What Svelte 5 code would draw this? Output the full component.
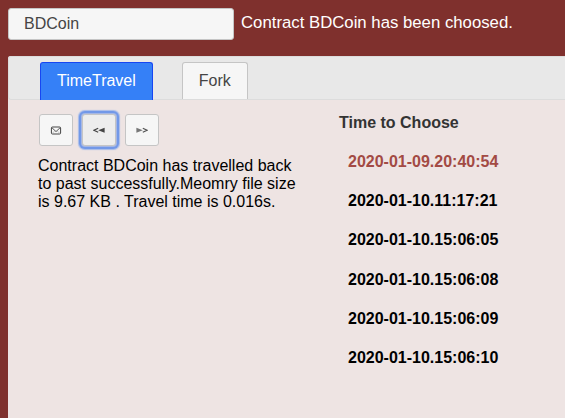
<script>
  const times = [
    '2020-01-09.20:40:54',
    '2020-01-10.11:17:21',
    '2020-01-10.15:06:05',
    '2020-01-10.15:06:08',
    '2020-01-10.15:06:09',
    '2020-01-10.15:06:10'
  ];
  let selected = $state(0);
  let tab = $state('TimeTravel');
</script>

<main>
  <header>
    <div class="contract">BDCoin</div>
    <span class="status">Contract BDCoin has been choosed.</span>
  </header>
  <section class="panel">
    <nav>
      {#each ['TimeTravel', 'Fork'] as name}
        <button class="tab" class:active={tab === name} onclick={() => (tab = name)}>{name}</button>
      {/each}
    </nav>
    <div class="body">
      <div class="travel">
        <div class="tools">
          <button class="tool" aria-label="Save">
            <svg width="12" height="12" viewBox="0 0 12 12" fill="none" stroke="#444" stroke-width="1">
              <rect x="1.4" y="3" width="9.2" height="7" rx="1" />
              <path d="M2 3.8 L6 7.6 L10 3.8" stroke-width=".9" />
              <path d="M2 9.6 L4.4 7.2 M10 9.6 L7.6 7.2" stroke="#999" stroke-width=".6" />
            </svg>
          </button>
          <button class="tool focused" aria-label="Back">
            <svg width="12" height="12" viewBox="0 0 12 12">
              <path d="M5.2 4.3 L1 6.3 L5.2 8.3" fill="none" stroke="#444" stroke-width="1.2" />
              <path d="M11.6 3.8 V8.8 L5.2 6.3 Z" fill="#444" />
            </svg>
          </button>
          <button class="tool" aria-label="Forward">
            <svg width="12" height="12" viewBox="0 0 12 12">
              <path d="M6.8 4.3 L11 6.3 L6.8 8.3" fill="none" stroke="#555" stroke-width="1.2" />
              <path d="M.4 3.8 V8.8 L6.8 6.3 Z" fill="#777" />
            </svg>
          </button>
        </div>
        <p>Contract BDCoin has travelled back to past successfully.Meomry file size is 9.67 KB . Travel time is 0.016s.</p>
      </div>
      <div class="choices">
        <h2>Time to Choose</h2>
        <ul>
          {#each times as time, i}
            <li><button class="time" class:selected={selected === i} onclick={() => (selected = i)}>{time}</button></li>
          {/each}
        </ul>
      </div>
    </div>
  </section>
</main>

<style>
  :global(body) { overflow: hidden; }
  * { box-sizing: border-box; }
  main {
    height: 100vh;
    padding: 8px 0 0 8px;
    display: flex;
    flex-direction: column;
    gap: 16px;
    background: #7f302d;
    font: 16px/18px "Liberation Sans", Arial, sans-serif;
    color: #000;
  }
  button { font: inherit; margin: 0; cursor: pointer; outline: none; }
  header { display: flex; gap: 7px; height: 32px; flex: none; }
  .contract {
    width: 226px;
    height: 32px;
    padding: 0 15px;
    border: 1px solid #c5c5c5;
    border-radius: 3px;
    background: #f6f6f6;
    color: #454545;
    line-height: 30px;
  }
  .status { color: #fff; font-size: 16.75px; line-height: 30px; white-space: nowrap; }
  .panel { flex: 1; background: #eee4e3; border-top-left-radius: 3px; }
  nav {
    display: flex;
    align-items: flex-end;
    gap: 29px;
    height: 44px;
    padding-left: 31px;
    border: 1px solid #dcdcdc;
    border-right: 0;
    border-radius: 3px 0 0 3px;
    background: #e8e8e8;
  }
  .tab {
    height: 37px;
    padding: 0 16px 1px;
    border: 1px solid #c5c5c5;
    border-bottom: 0;
    border-radius: 3px 3px 0 0;
    background: #f6f6f6;
    color: #454545;
  }
  .tab.active {
    height: 38px;
    margin-bottom: -1px;
    padding-bottom: 2px;
    background: #3580f7;
    border-color: #1646f2;
    color: #fff;
  }
  .body { display: flex; padding: 14px 0 0 30px; }
  .travel { width: 270px; }
  .tools { display: flex; gap: 9px; padding-left: 1px; }
  .tool {
    display: flex;
    align-items: center;
    justify-content: center;
    width: 34px;
    height: 32px;
    padding: 0;
    border: 1px solid #c5c5c5;
    border-radius: 3px;
    background: #f6f6f6;
  }
  .focused {
    background: #ededed;
    box-shadow: 0 0 0 1px #a5b7e4, 0 0 0 3px #7298e8, 0 0 1px 3.5px #a6bbe9;
  }
  p { margin: 11px 0 0; }
  .choices { padding-left: 31px; }
  h2 { margin: 0; font-size: 16px; line-height: 18px; color: #333; }
  ul { list-style: none; margin: 21px 0 0; padding: 0 0 0 9px; }
  li { height: 39.2px; }
  .time { display: block; border: 0; padding: 0; background: none; color: #000; font-weight: bold; }
  .time.selected { color: #a34a44; }
</style>
